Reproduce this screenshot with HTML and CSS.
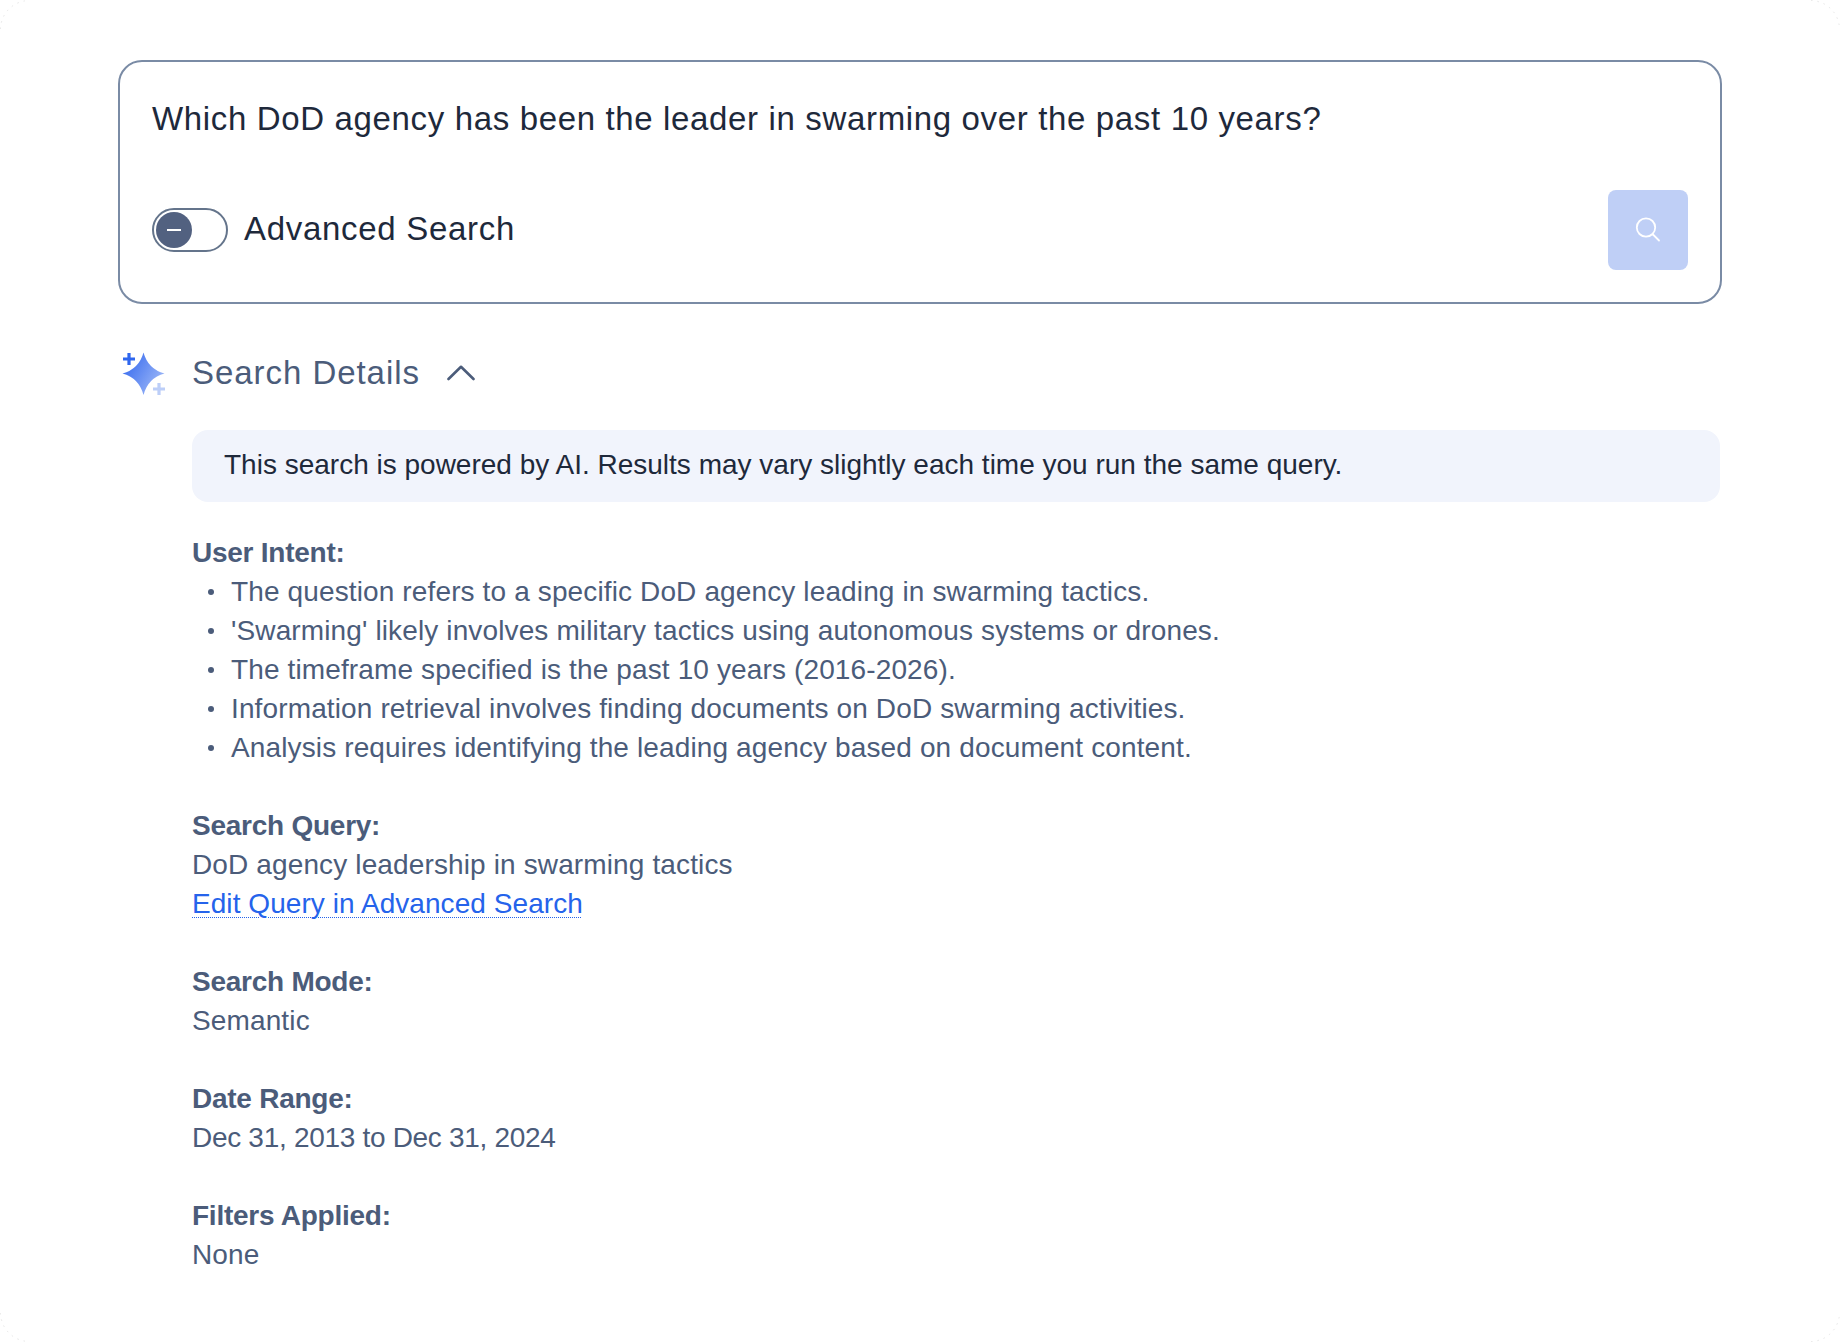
FILE: index.html
```html
<!DOCTYPE html>
<html lang="en">
<head>
    <meta charset="UTF-8">
    <title>Search Details</title>
    <link rel="stylesheet" href="styles.css">
</head>
<body>
    <div class="page">
        <svg class="corners" width="1840" height="1342" viewBox="0 0 1840 1342" fill="none" stroke="#e6e6e6" stroke-width="1" stroke-dasharray="1.5 5">
            <path d="M0.5 29A29 29 0 0 1 29 0.5"/>
            <path d="M1811 0.5A29 29 0 0 1 1839.5 29"/>
            <path d="M0.5 1313A29 29 0 0 0 29 1341.5"/>
            <path d="M1811 1341.5A29 29 0 0 0 1839.5 1313"/>
        </svg>

        <div class="search-box">
            <div class="question">Which DoD agency has been the leader in swarming over the past 10 years?</div>
            <div class="search-actions">
                <div class="advanced">
                    <span class="toggle"><span class="knob"></span></span>
                    <span class="advanced-label">Advanced Search</span>
                </div>
                <button class="search-btn" type="button">
                    <svg width="32" height="32" viewBox="0 0 32 32" fill="none" stroke="#fff" stroke-width="1.8" stroke-linecap="round">
                        <circle cx="14" cy="13.5" r="9.2"/>
                        <path d="M21 20.5 27 26.5"/>
                    </svg>
                </button>
            </div>
        </div>

        <div class="details-header">
            <svg class="sparkle" width="48" height="48" viewBox="0 0 48 48">
                <defs>
                    <linearGradient id="starFill" x1="0" y1="0.2" x2="1" y2="0.8">
                        <stop offset="0" stop-color="#3468ee"/>
                        <stop offset="1" stop-color="#a4bdf8"/>
                    </linearGradient>
                </defs>
                <path fill="url(#starFill)" d="M23.5 3.5Q28 20 44.5 24.5 28 29 23.5 46 19 29 2.5 24.5 19 20 23.5 3.5Z"/>
                <path stroke="#2f66ee" stroke-width="3.2" fill="none" d="M9 4V16M3 10H15"/>
                <path stroke="#bccef8" stroke-width="3.2" fill="none" d="M39 34V46M33 40H45"/>
            </svg>
            <span class="details-title">Search Details</span>
            <svg width="28" height="16" viewBox="0 0 28 16" fill="none" stroke="#4b5c7a" stroke-width="2.6" stroke-linecap="round" stroke-linejoin="round">
                <path d="M1.5 14 14 1.8 26.5 14"/>
            </svg>
        </div>

        <div class="details-body">
            <div class="notice">This search is powered by AI. Results may vary slightly each time you run the same query.</div>

            <div class="section">
                <div class="section-title">User Intent:</div>
                <ul class="intent-list">
                    <li>The question refers to a specific DoD agency leading in swarming tactics.</li>
                    <li>'Swarming' likely involves military tactics using autonomous systems or drones.</li>
                    <li>The timeframe specified is the past 10 years (2016-2026).</li>
                    <li>Information retrieval involves finding documents on DoD swarming activities.</li>
                    <li>Analysis requires identifying the leading agency based on document content.</li>
                </ul>
            </div>

            <div class="section">
                <div class="section-title">Search Query:</div>
                <div>DoD agency leadership in swarming tactics</div>
                <a href="#" class="edit-link">Edit Query in Advanced Search</a>
            </div>

            <div class="section">
                <div class="section-title">Search Mode:</div>
                <div>Semantic</div>
            </div>

            <div class="section">
                <div class="section-title">Date Range:</div>
                <div class="date-value">Dec 31, 2013 to Dec 31, 2024</div>
            </div>

            <div class="section">
                <div class="section-title">Filters Applied:</div>
                <div>None</div>
            </div>
        </div>
    </div>
</body>
</html>
```

FILE: styles.css
```css
* {
    margin: 0;
    padding: 0;
    box-sizing: border-box;
}

body {
    font-family: 'Liberation Sans', Arial, sans-serif;
    background: #fff;
    color: #4b5c7a;
}

.page {
    position: relative;
    width: 1840px;
    height: 1342px;
    padding: 60px 118px 0;
    overflow: hidden;
}

.corners {
    position: absolute;
    left: 0;
    top: 0;
}

.search-box {
    height: 244px;
    padding: 32px;
    border: 2px solid #7a8ba5;
    border-radius: 24px;
}

.question {
    margin-top: 1px;
    font-size: 33px;
    line-height: 48px;
    color: #1e293b;
    letter-spacing: 0.65px;
}

.search-actions {
    display: flex;
    align-items: center;
    justify-content: space-between;
    margin-top: 47px;
}

.advanced {
    display: flex;
    align-items: center;
    gap: 16px;
}

.toggle {
    display: flex;
    align-items: center;
    width: 76px;
    height: 44px;
    padding-left: 2px;
    border: 2px solid #64748b;
    border-radius: 22px;
}

.knob {
    position: relative;
    width: 36px;
    height: 36px;
    border-radius: 50%;
    background: #526180;
}

.knob::after {
    content: "";
    position: absolute;
    left: 11px;
    top: 17px;
    width: 14px;
    height: 2px;
    background: #fff;
}

.advanced-label {
    margin-bottom: 2px;
    font-size: 33px;
    color: #1e293b;
    letter-spacing: 0.7px;
}

.search-btn {
    display: flex;
    align-items: center;
    justify-content: center;
    width: 80px;
    height: 80px;
    border: none;
    border-radius: 8px;
    background: #bfcff6;
}

.details-header {
    display: flex;
    align-items: center;
    gap: 24px;
    margin-top: 45px;
    height: 48px;
}

.sparkle {
    margin-left: 2px;
}

.details-title {
    font-size: 33px;
    letter-spacing: 0.95px;
    margin-right: 3px;
}

.details-body {
    margin: 33px 2px 0 74px;
    font-size: 28px;
    line-height: 39px;
    letter-spacing: 0.13px;
}

.notice {
    padding: 15px 32px 18px;
    border-radius: 16px;
    background: #f1f4fc;
    color: #1e293b;
    letter-spacing: 0;
    margin-bottom: 31px;
}

.section {
    margin-bottom: 39px;
}

.section-title {
    font-weight: 700;
    letter-spacing: -0.25px;
}

.date-value {
    letter-spacing: -0.3px;
}

.intent-list {
    list-style: none;
}

.intent-list li {
    position: relative;
    padding-left: 39px;
}

.intent-list li::before {
    content: "";
    position: absolute;
    left: 16px;
    top: 17px;
    width: 6px;
    height: 6px;
    border-radius: 50%;
    background: #4b5c7a;
}

.edit-link {
    color: #2563eb;
    letter-spacing: 0.06px;
    text-decoration: underline dotted 1px;
    text-underline-offset: 4px;
}
```
